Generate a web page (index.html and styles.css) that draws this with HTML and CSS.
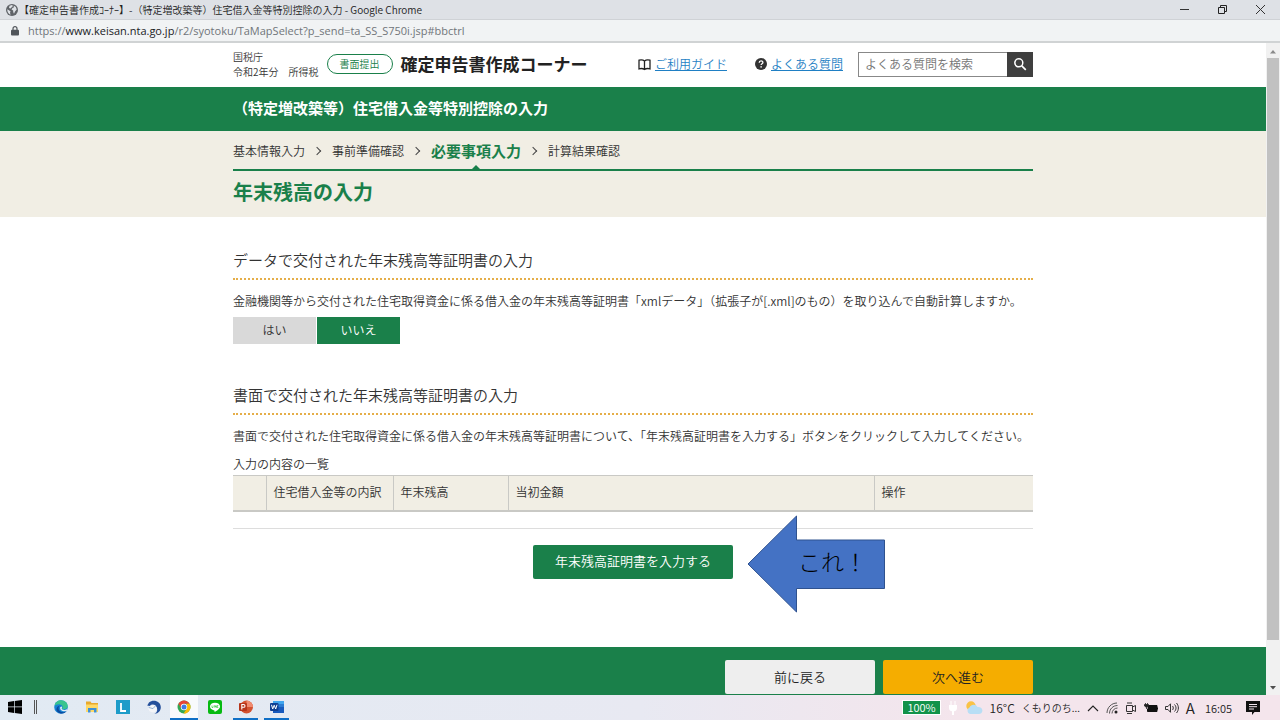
FILE: index.html
```html
<!DOCTYPE html>
<html lang="ja">
<head>
<meta charset="utf-8">
<meta name="viewport" content="width=device-width, initial-scale=1">
<title>【確定申告書作成ｺｰﾅｰ】-（特定増改築等）住宅借入金等特別控除の入力</title>
<link rel="stylesheet" href="styles.css">
</head>
<body>
<div class="titlebar">
  <svg class="globe" width="12" height="12" viewBox="0 0 12 12" aria-hidden="true"><circle cx="6" cy="6" r="6" fill="#5f6368"/><path d="M1.2 5.2 3 6.2l1.600 1.200-.6 1.300.6 2C2.500 10 1.200 8 1.200 5.200zM3.500 1.800 6 1l1 1-1.300 1.200L4.500 4.500 3 4zM7.500 1.500l2.300 1.600.9 2.400L9 7.500 8 9.800 7.200 8V6.600L5.500 5.500 6.500 4l1.500-.8z" fill="#dee1e6"/></svg>
  <span class="window-title">【確定申告書作成ｺｰﾅｰ】-（特定増改築等）住宅借入金等特別控除の入力 - Google Chrome</span>
  <div class="window-controls">
    <button type="button" aria-label="最小化"><svg width="12" height="12" viewBox="0 0 12 12"><path d="M1 5.500h9" stroke="#333"/></svg></button>
    <button type="button" aria-label="元に戻す"><svg width="12" height="12" viewBox="0 0 12 12"><path d="M1.500 3.500h6v6h-6zM3.500 3.500v-2h6v6h-2" fill="none" stroke="#222"/></svg></button>
    <button type="button" aria-label="閉じる"><svg width="12" height="12" viewBox="0 0 12 12"><path d="M1 1l9 9M10 1l-9 9" stroke="#333"/></svg></button>
  </div>
</div>
<div class="urlbar">
  <svg width="8" height="10" viewBox="0 0 8 10" aria-hidden="true"><path d="M2 4V2.700a2 2 0 0 1 4 0V4" fill="none" stroke="#50555a" stroke-width="1.200"/><rect y="3.800" width="8" height="5.700" rx="1" fill="#50555a"/></svg>
  <span class="url">https://<b>www.keisan.nta.go.jp</b>/r2/syotoku/TaMapSelect?p_send=ta_SS_S750i.jsp#bbctrl</span>
</div>

<div class="viewport">
  <div class="page">
    <header class="site-header">
      <div class="container header-row">
        <p class="agency">国税庁<br>令和2年分　所得税</p>
        <span class="badge">書面提出</span>
        <p class="site-name">確定申告書作成コーナー</p>
        <a class="help-link" href="#"><svg width="13" height="13" viewBox="0 0 13 13" aria-hidden="true"><path d="M6.500 3C5 1.700 3 1.700 1 2.200v8.600c2-.5 4-.4 5.500.7C8 10.400 10 10.300 12 10.800V2.200C10 1.700 8 1.700 6.500 3zv8.500" fill="none" stroke="#222" stroke-width="1.300"/></svg><span>ご利用ガイド</span></a>
        <a class="help-link faq" href="#"><svg width="12" height="12" viewBox="0 0 12 12" aria-hidden="true"><circle cx="6" cy="6" r="6" fill="#333"/><path d="M4.200 4.700c0-2.400 3.700-2.300 3.700-.2 0 1.300-1.800 1.300-1.800 2.600" fill="none" stroke="#fff" stroke-width="1.300"/><circle cx="6.100" cy="8.900" r=".8" fill="#fff"/></svg><span>よくある質問</span></a>
        <form class="search">
          <input type="text" placeholder="よくある質問を検索" aria-label="よくある質問を検索">
          <button type="button" aria-label="検索"><svg width="14" height="14" viewBox="0 0 14 14"><circle cx="5.800" cy="5.800" r="4" fill="none" stroke="#fff" stroke-width="1.500"/><path d="M8.800 8.800 12.800 12.800" stroke="#fff" stroke-width="1.700"/></svg></button>
        </form>
      </div>
    </header>
    <div class="section-bar"><p class="container">（特定増改築等）住宅借入金等特別控除の入力</p></div>
    <div class="step-area">
      <div class="container">
        <ol class="steps">
          <li>基本情報入力</li>
          <li>事前準備確認</li>
          <li class="current" aria-current="step">必要事項入力</li>
          <li>計算結果確認</li>
        </ol>
        <h1>年末残高の入力</h1>
      </div>
    </div>

    <main class="container">
      <section>
        <h2>データで交付された年末残高等証明書の入力</h2>
        <p class="lead">金融機関等から交付された住宅取得資金に係る借入金の年末残高等証明書「xmlデータ」（拡張子が[.xml]のもの）を取り込んで自動計算しますか。</p>
        <div class="toggle">
          <button type="button" aria-pressed="false">はい</button>
          <button type="button" class="on" aria-pressed="true">いいえ</button>
        </div>
      </section>
      <section>
        <h2>書面で交付された年末残高等証明書の入力</h2>
        <p class="lead">書面で交付された住宅取得資金に係る借入金の年末残高等証明書について、「年末残高証明書を入力する」ボタンをクリックして入力してください。</p>
        <table>
          <caption>入力の内容の一覧</caption>
          <colgroup><col class="c-no"><col class="c-type"><col class="c-balance"><col class="c-initial"><col></colgroup>
          <thead><tr><th></th><th>住宅借入金等の内訳</th><th>年末残高</th><th>当初金額</th><th>操作</th></tr></thead>
          <tbody><tr><td colspan="5"></td></tr></tbody>
        </table>
        <div class="action">
          <button type="button">年末残高証明書を入力する</button>
          <div class="callout">
            <svg width="138" height="98" viewBox="0 0 138 98" aria-hidden="true"><path d="M1 49 49.500 1v24h88v48.500h-88V97z" fill="#4472c4" stroke="#2f528f"/></svg>
            <span>これ！</span>
          </div>
        </div>
      </section>
    </main>

    <footer class="page-footer">
      <div class="container">
        <button type="button" class="back">前に戻る</button>
        <button type="button" class="next">次へ進む</button>
      </div>
    </footer>
  </div>
  <div class="scrollbar" aria-hidden="true">
    <svg width="14" height="15" viewBox="0 0 14 15"><path d="M4 10.500 7 7l3 3.500z" fill="#8a8a8a"/></svg>
    <span class="thumb"></span>
    <svg width="14" height="15" viewBox="0 0 14 15"><path d="M4 6l3 3.500L10 6z" fill="#505050"/></svg>
  </div>
</div>

<div class="taskbar">
  <div class="apps">
    <span class="app start"><svg width="14" height="14" viewBox="0 0 14 14"><path d="M0 2l6-.9v5.500H0zM6.700 1 14 0v6.600H6.700zM0 7.300h6v5.600L0 12zM6.700 7.300H14V14l-7.300-1z" fill="#000"/></svg></span>
    <span class="grip"></span>
    <span class="app"><svg width="14" height="14" viewBox="0 0 14 14"><circle cx="7" cy="7" r="6.800" fill="#1683d3"/><path d="M.4 6C1 2 4 .2 7 .2c4.500 0 7 3.300 6.800 6.100-.2 2-2 3-4 3-1.400 0-2-.6-1.300-1.400C9 7 8.700 4.600 5.800 4.400 3.500 4.200 1.400 5 .4 6z" fill="#39c48f"/><path d="M5 6.500c-1.500 2.800.8 6 4.500 5.800 1.500 0 2.600-.6 3.400-1.700-1.500 3.200-6 4-9 1.600C1 9.500 2.500 6 6.500 5.500z" fill="#0b4a9e"/><path d="M8 6.500c.6.900-.7 1.500-.2 2.300.8 1.500 3.500 1.500 5 .4l.8-.8-.6 2.400C9 12.500 5.300 10 6.300 7z" fill="#e4edf5"/></svg></span>
    <span class="app"><svg width="14" height="14" viewBox="0 0 14 14"><path d="M1 1.500h4.500l1 1.500H13v9H1z" fill="#e8a92e"/><path d="M1 4.500h12V12H1z" fill="#ffd966"/><path d="M3 8h8.500v4.500H9V10H5.500v2.500H3z" fill="#3f91d5"/></svg></span>
    <span class="app"><svg width="14" height="14" viewBox="0 0 14 14"><path d="M0 0h14v14H0z" fill="#1d9cc9"/><path d="M5 3v8h5" fill="none" stroke="#fff" stroke-width="1.800"/></svg></span>
    <span class="app"><svg width="14" height="14" viewBox="0 0 14 14"><path d="M2 2.500C6-1 14 .8 13.800 7.600 13.700 11 11 14 7.500 13.800 10 12.800 11 10 9.500 7 8 4 5 3.800 2.600 6L.2 5.500z" fill="#244f9b"/><path d="M1.500 7.500 6 5c3-.2 4.500 3 3.500 5.300-.8 2-3.500 2.700-5.500 1.700-2-.8-3-2.700-2.500-4.500z" fill="#f5f5f8"/><path d="M1.800 7.500 6 8.600 8.500 5.800" fill="none" stroke="#7aa0c9" stroke-width=".8"/></svg></span>
    <span class="app running focused"><svg width="14" height="14" viewBox="0 0 14 14"><circle cx="7" cy="7" r="6.500" fill="#34a853"/><path d="M1.400 3.700A6.500 6.500 0 0 1 12.600 3.800H7L4.200 8.500z" fill="#ea4335"/><path d="M12.600 3.800A6.500 6.500 0 0 1 6.600 13.500L9.800 8.500 9.600 3.800z" fill="#fbbc05"/><circle cx="7" cy="7" r="3.200" fill="#fff"/><circle cx="7" cy="7" r="2.500" fill="#3e7be5"/></svg></span>
    <span class="app"><svg width="14" height="14" viewBox="0 0 14 14"><rect width="14" height="14" rx="2" fill="#06ba12"/><path d="M7 2.700c-3 0-5 1.700-5 3.900 0 2 1.800 3.500 4.200 3.800.8.200.2 1.200.5 1.600C8.500 11.200 12 9 12 6.600c0-2.200-2-3.900-5-3.900z" fill="#fff"/><path d="M4 5.500v2h1M6 5.500v2M7 7.500v-2l1.300 2v-2M10.300 5.500h-1v2h1" fill="none" stroke="#06ba12" stroke-width=".6"/></svg></span>
    <span class="app running"><svg width="14" height="14" viewBox="0 0 14 14"><circle cx="7.500" cy="7" r="6.500" fill="#d35230"/><path d="M7.500.5a6.500 6.500 0 0 1 6.500 6.500H7.500z" fill="#f08b70"/><rect y="3" width="8" height="8" rx="1" fill="#b7351b"/><path d="M2.800 9.500v-5h1.700c2 0 2 2.800 0 2.800H3" fill="none" stroke="#fff" stroke-width="1.100"/></svg></span>
    <span class="app running"><svg width="14" height="14" viewBox="0 0 14 14"><path d="M3 1h11v4H3z" fill="#41a5ee"/><path d="M3 4h11v3.500H3z" fill="#2b7cd3"/><path d="M3 7h11v6H3z" fill="#185abd"/><rect y="3" width="8.500" height="8" rx="1" fill="#103f91"/><path d="M1.500 4.800 2.700 9 4.200 5.200 5.700 9 7 4.800" fill="none" stroke="#fff"/></svg></span>
  </div>
  <div class="tray">
    <span class="battery">100%</span>
    <svg class="plug" width="10" height="14" viewBox="0 0 10 14"><path d="M3 0v4M7 0v4" stroke="#fff"/><path d="M1 4h8v3c0 2-1 3-3 3.300V14H4v-3.700C2 10 1 9 1 7z" fill="#fff"/></svg>
    <svg class="weather" width="18" height="14" viewBox="0 0 18 14"><circle cx="6" cy="5" r="4.700" fill="#f9c246"/><path d="M5 13a3.500 3.500 0 0 1-.5-6.500C6 3 11 3 12.500 6c3-.3 5 1.500 4.900 3.700C17.200 12 15.500 13 14 13z" fill="#b8def5"/></svg>
    <span class="temp">16°C</span>
    <span class="forecast">くもりのち...</span>
    <svg width="12" height="12" viewBox="0 0 12 12"><path d="M1 9l5-5 5 5" fill="none" stroke="#222" stroke-width="1.100"/></svg>
    <svg width="12" height="12" viewBox="0 0 12 12"><path d="M1 11C1 5.500 5.500 1 11 1M3.500 11.500C3.500 7 7 3.500 11.500 3.500M6 11.500C6 8.500 8.500 6 11.500 6" fill="none" stroke="#555"/><circle cx="10" cy="10" r="1.500" fill="#222"/></svg>
    <svg width="12" height="12" viewBox="0 0 12 12"><path d="M1.500 3.500h6v6h-6zM7.500 5l3-1.500v6l-3-1.500M2 1h5M2 11.500h5" fill="none" stroke="#333"/></svg>
    <svg width="14" height="12" viewBox="0 0 14 12"><path d="M4 3.500h9v6H3.500V7" fill="#111" stroke="#111"/><path d="M13.500 5.500v2" stroke="#111"/><path d="M.5 2.500h4V4L2.500 5.500.5 4zM1.500 1v1.500M3.500 1v1.500M2.500 5.500V7" fill="#222" stroke="#222" stroke-width=".8"/></svg>
    <svg width="14" height="12" viewBox="0 0 14 12"><path d="M.5 4.500H3l2.500-2.700v8.500L3 7.500H.5zM7.500 4c1 1 1 3 0 4M9.500 2.500c2 2 2 5 0 7M11.500 1c2.500 3 2.500 7 0 10" fill="none" stroke="#333"/></svg>
    <span class="ime">A</span>
    <time>16:05</time>
    <svg class="notice" width="14" height="14" viewBox="0 0 14 14"><path d="M0 0h14v11H8.500L6 14v-3H0z" fill="#111"/><path d="M3 3.500h8M3 5.700h8M3 8h5" stroke="#f3e5ee"/></svg>
  </div>
</div>
</body>
</html>
```

FILE: styles.css
```css
* { box-sizing: border-box; }

body {
  margin: 0;
  height: 100vh;
  display: flex;
  flex-direction: column;
  overflow: hidden;
  font-family: "Noto Sans CJK JP", "Noto Sans", sans-serif;
  font-size: 12px;
  font-weight: 350;
  line-height: 16px;
  color: #333;
  background: #fff;
}

h1, h2, p, ol { margin: 0; padding: 0; }
button, input { font: inherit; border: 0; padding: 0; margin: 0; }
svg { display: block; flex: none; }

/* Browser window */
.titlebar {
  flex: none;
  display: flex;
  align-items: center;
  height: 19px;
  padding-left: 6px;
  background: #dee1e6;
  color: #222;
  font-size: 10px;
}
.window-title { flex: 1; margin-left: 1px; white-space: nowrap; }
.window-controls { display: flex; }
.window-controls button {
  width: 38px;
  height: 19px;
  display: flex;
  justify-content: center;
  align-items: center;
  background: none;
}
.urlbar {
  flex: none;
  display: flex;
  align-items: center;
  gap: 9px;
  height: 24px;
  padding-left: 11px;
  background: #f1f3f4;
  border-top: 1px solid #cfd2d6;
  border-bottom: 2px solid #d0d3d4;
  color: #70757a;
  font-family: "Open Sans", "Noto Sans", sans-serif;
  font-size: 11px;
  font-weight: 400;
}
.url b { font-weight: 400; color: #202124; }

.viewport { flex: 1; min-height: 0; display: flex; }
.page { flex: 1; min-width: 0; display: flex; flex-direction: column; }
.container { width: 100%; max-width: 800px; margin: 0 auto; }

.scrollbar {
  flex: none;
  width: 14px;
  display: flex;
  flex-direction: column;
  background: #f1f1f1;
}
.thumb { flex: 1; margin: 0 1px 40px; background: #c1c1c1; }

/* Site header */
.header-row {
  display: flex;
  align-items: center;
  height: 44px;
  padding-bottom: 2px;
}
.agency { font-size: 10px; line-height: 15px; white-space: nowrap; }
.badge {
  margin-left: 8px;
  width: 66px;
  height: 20px;
  border: 1px solid #1a804a;
  border-radius: 10px;
  color: #1a804a;
  font-size: 10px;
  line-height: 18px;
  text-align: center;
}
.site-name {
  margin-left: 8px;
  color: #222;
  font-size: 17px;
  font-weight: 700;
  line-height: 24px;
  white-space: nowrap;
}
.help-link {
  display: flex;
  align-items: center;
  gap: 4px;
  margin-left: auto;
  color: #1f7fc4;
  text-decoration: none;
  white-space: nowrap;
}
.help-link span { text-decoration: underline; }
.faq { margin-left: 28px; }
.search { display: flex; width: 175px; height: 25px; margin-left: 15px; }
.search input {
  flex: 1;
  min-width: 0;
  padding: 0 6px;
  border: 1px solid #888;
  border-right: 0;
  background: #fff;
}
.search input::placeholder { color: #757575; }
.search button {
  width: 26px;
  display: flex;
  align-items: center;
  justify-content: center;
  background: #3f3f3f;
}

.section-bar {
  display: flex;
  align-items: center;
  height: 44px;
  padding-bottom: 3px;
  background: #1a804a;
  color: #fff;
  font-size: 15px;
  font-weight: 700;
}

/* Steps */
.step-area { height: 86px; background: #f1eee4; }
.steps {
  display: flex;
  align-items: center;
  height: 40px;
  padding-top: 2px;
  border-bottom: 2px solid #1a804a;
  list-style: none;
}
.steps li { display: flex; align-items: center; position: relative; }
.steps li + li::before {
  content: "";
  width: 5px;
  height: 5px;
  margin: 0 12px 0 9px;
  border: solid #444;
  border-width: 1px 1px 0 0;
  transform: rotate(45deg);
}
.steps .current { color: #1a804a; font-size: 15px; font-weight: 700; }
.steps .current::after {
  content: "";
  position: absolute;
  right: 41px;
  bottom: -10px;
  border: 4px solid transparent;
  border-top-width: 0;
  border-bottom-color: #1a804a;
}
h1 { padding-top: 7px; color: #1a804a; font-size: 20px; line-height: 28px; }

/* Form */
main { flex: 1; padding-top: 30px; }
section + section { margin-top: 38px; }
h2 {
  padding-bottom: 5px;
  border-bottom: 2px dotted #e5ae49;
  font-size: 15px;
  font-weight: 350;
  line-height: 26px;
}
.lead { margin-top: 11px; line-height: 20px; white-space: nowrap; }
.toggle { display: flex; gap: 1px; margin-top: 6px; }
.toggle button {
  flex: none;
  width: 83px;
  height: 27px;
  padding-bottom: 2px;
  background: #d9d9d9;
  color: #333;
}
.toggle .on { background: #1a804a; color: #fff; }

table {
  width: 100%;
  margin-top: 10px;
  border-collapse: collapse;
  table-layout: fixed;
}
caption { padding-bottom: 3px; text-align: left; }
.c-no { width: 33px; }
.c-type { width: 127px; }
.c-balance { width: 115px; }
.c-initial { width: 366px; }
th {
  height: 35px;
  padding: 0 7px 2px;
  border: solid #c9c9c5;
  border-width: 1px 1px 2px;
  background: #f1eee4;
  font-weight: 350;
  text-align: left;
  white-space: nowrap;
}
th:first-child { border-left: 0; }
th:last-child { border-right: 0; }
td { height: 18px; padding: 0; border-bottom: 1px solid #ddd; }

.action { position: relative; margin-top: 16px; text-align: center; }
.action button {
  width: 200px;
  height: 34px;
  padding-bottom: 2px;
  border-radius: 2px;
  background: #1a804a;
  color: #fff;
  font-size: 13px;
}
.callout { position: absolute; left: calc(50% + 114px); top: -30px; }
.callout span {
  position: absolute;
  left: 51px;
  top: 30px;
  color: #000;
  font-size: 23px;
  font-weight: 300;
  line-height: 32px;
  white-space: nowrap;
}

.page-footer { height: 48px; background: #1a804a; }
.page-footer .container {
  display: flex;
  justify-content: flex-end;
  gap: 8px;
  padding-top: 13px;
}
.page-footer button {
  width: 150px;
  height: 34px;
  border-radius: 2px;
  background: #eee;
  color: #222;
  font-size: 13px;
}
.page-footer .next { background: #f5ad00; }

/* Desktop taskbar */
.taskbar {
  flex: none;
  display: flex;
  justify-content: space-between;
  height: 25px;
  background: linear-gradient(90deg, #e1eaf3, #e8e9f2 50%, #f4e5ec 75%);
  color: #222;
}
.apps { display: flex; }
.app {
  width: 31px;
  display: flex;
  align-items: center;
  justify-content: center;
  border-bottom: 2px solid transparent;
}
.start { width: 29px; }
.grip { width: 3px; height: 14px; margin: 5px 8px 0 5px; border: solid #555; border-width: 0 1px; }
.running { width: 25px; margin: 0 3px; border-bottom-color: #0f6fc6; }
.focused { width: 28px; margin: 0 1px; background: #f8fafc; }
.tray { display: flex; align-items: center; gap: 7px; padding-right: 20px; }
.battery {
  padding: 0 4px;
  height: 15px;
  border: 1px solid #fff;
  background: #12934a;
  color: #fff;
  font-size: 11px;
  line-height: 13px;
}
.forecast { font-size: 10px; white-space: nowrap; }
.ime { font-size: 15px; }
.tray time { font-size: 11px; margin-left: 3px; }
.notice { margin-left: 7px; }
```
